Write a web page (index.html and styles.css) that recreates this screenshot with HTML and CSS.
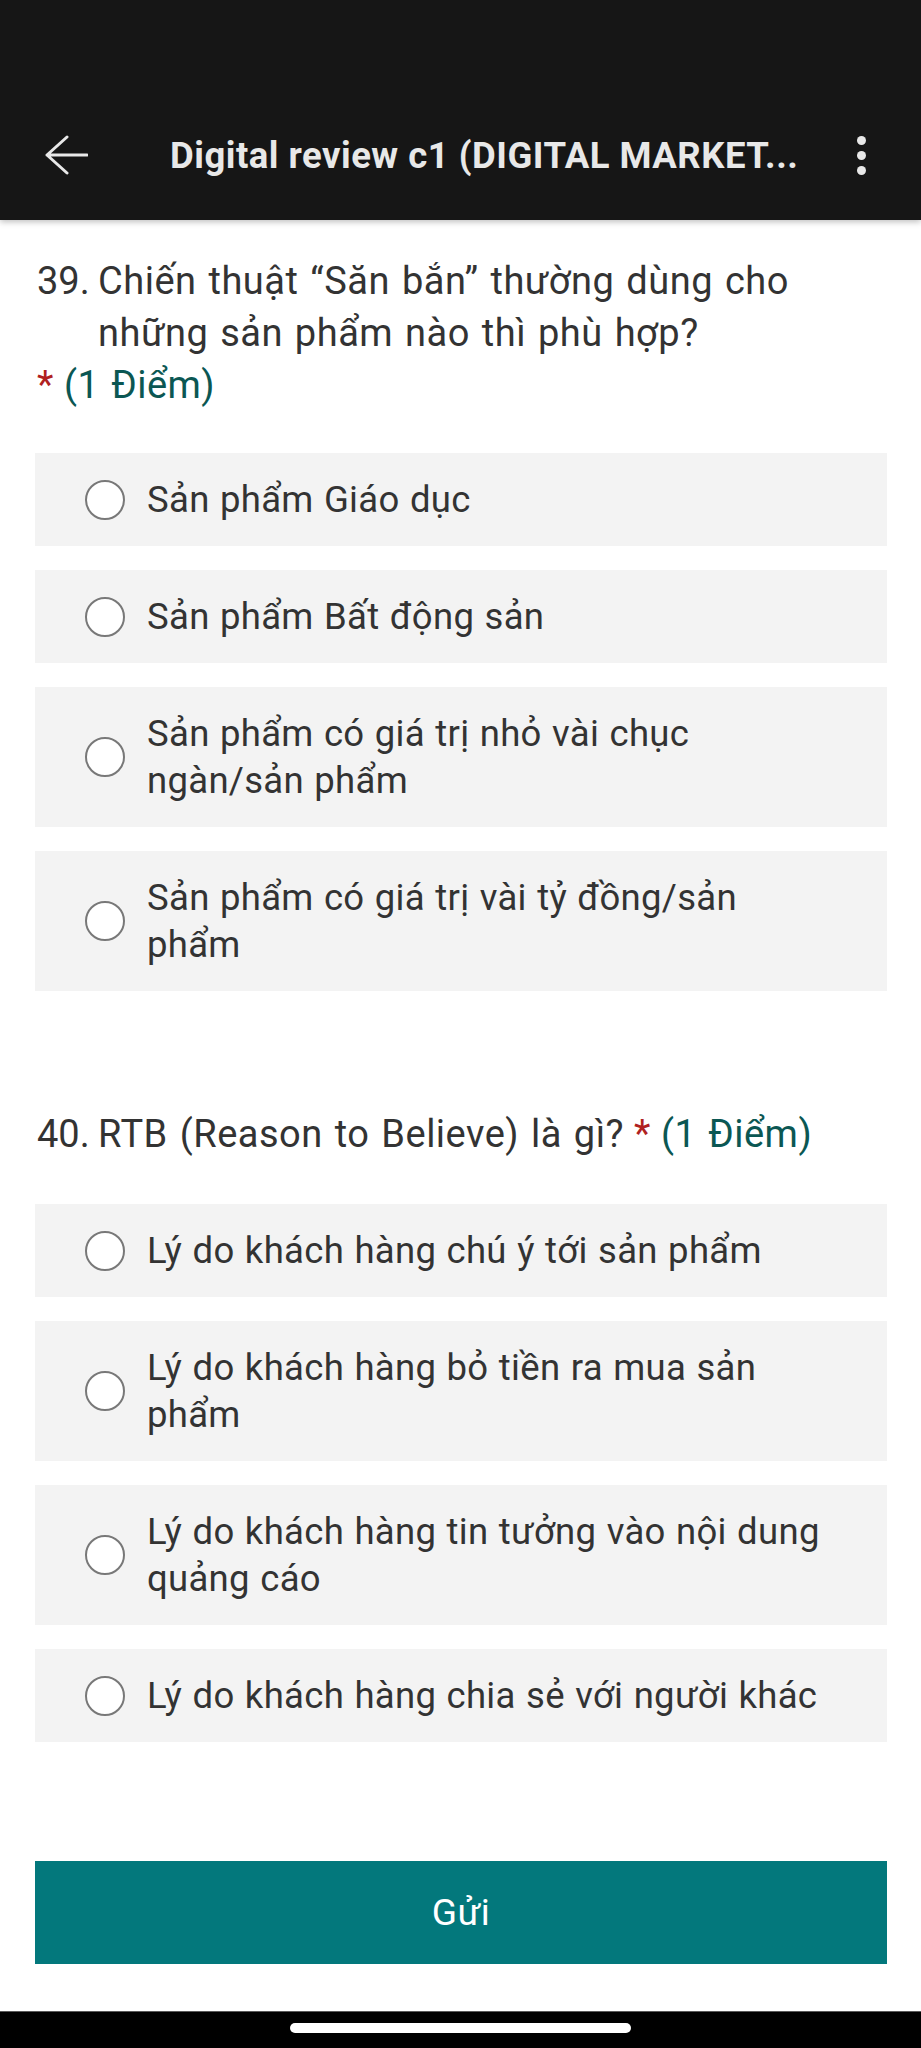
FILE: index.html
```html
<!DOCTYPE html>
<html lang="vi">
<head>
<meta charset="utf-8">
<title>Digital review c1</title>
<link rel="stylesheet" href="styles.css">
</head>
<body>
<header class="appbar">
  <div class="toolbar">
    <button class="icon-btn back" aria-label="Back">
      <svg width="44" height="40" viewBox="0 0 44 40"><path d="M23 2 L3 20 L23 38 M3 20 H43" fill="none" stroke="#e8e8e8" stroke-width="3" stroke-linecap="round" stroke-linejoin="round"/></svg>
    </button>
    <h1 class="title">Digital review c1 (DIGITAL MARKET...</h1>
    <button class="icon-btn more" aria-label="More">
      <span class="dot"></span><span class="dot"></span><span class="dot"></span>
    </button>
  </div>
</header>

<main class="form">
  <section class="question q39">
    <div class="q-title">
      <span class="q-num">39.</span>
      <span class="q-text">Chiến thuật “Săn bắn” thường dùng cho những sản phẩm nào thì phù hợp?</span>
      <span class="q-req">*</span>
      <span class="q-points">(1 Điểm)</span>
    </div>
    <div class="choices">
      <label class="choice"><span class="radio"></span><span class="choice-text">Sản phẩm Giáo dục</span></label>
      <label class="choice"><span class="radio"></span><span class="choice-text">Sản phẩm Bất động sản</span></label>
      <label class="choice"><span class="radio"></span><span class="choice-text">Sản phẩm có giá trị nhỏ vài chục ngàn/sản phẩm</span></label>
      <label class="choice"><span class="radio"></span><span class="choice-text">Sản phẩm có giá trị vài tỷ đồng/sản phẩm</span></label>
    </div>
  </section>

  <section class="question q40">
    <div class="q-title">
      <span class="q-num">40.</span>
      <span class="q-text">RTB (Reason to Believe) là gì?</span>
      <span class="q-req">*</span>
      <span class="q-points">(1 Điểm)</span>
    </div>
    <div class="choices">
      <label class="choice"><span class="radio"></span><span class="choice-text">Lý do khách hàng chú ý tới sản phẩm</span></label>
      <label class="choice"><span class="radio"></span><span class="choice-text">Lý do khách hàng bỏ tiền ra mua sản phẩm</span></label>
      <label class="choice"><span class="radio"></span><span class="choice-text">Lý do khách hàng tin tưởng vào nội dung quảng cáo</span></label>
      <label class="choice"><span class="radio"></span><span class="choice-text">Lý do khách hàng chia sẻ với người khác</span></label>
    </div>
  </section>

  <button class="submit">Gửi</button>
</main>

<footer class="navbar"><span class="pill"></span></footer>
</body>
</html>
```

FILE: styles.css
```css
* { box-sizing: border-box; }
html, body { margin: 0; padding: 0; background: #ffffff; }
body {
  font-family: Roboto, "Noto Sans", "Liberation Sans", sans-serif;
  color: #333333;
  width: 921px;
}

.appbar {
  height: 220px;
  background: #161616;
  padding-top: 100px;
  box-shadow: 0 2px 6px rgba(0, 0, 0, 0.25);
  position: relative;
  z-index: 1;
}
.toolbar {
  height: 110px;
  display: flex;
  align-items: center;
  padding: 0 0 0 44px;
}
.icon-btn {
  background: none;
  border: 0;
  padding: 0;
  margin: 0;
  display: flex;
  align-items: center;
  justify-content: center;
}
.back { width: 44px; height: 40px; }
.back svg { display: block; }
.title {
  margin: 0 0 0 82px;
  font-size: 36.5px;
  font-weight: 700;
  color: #e8e8e8;
  white-space: nowrap;
  flex: 1 1 auto;
  letter-spacing: 0.5px;
}
.more {
  width: 12px;
  flex-direction: column;
  gap: 6px;
  margin-right: 54px;
}
.dot {
  width: 9px;
  height: 9px;
  border-radius: 50%;
  background: #e8e8e8;
  display: block;
}

.form {
  padding: 35px 34px 0 35px;
}
.question { margin-bottom: 117px; }
.question.q40 { margin-bottom: 119px; }

.q-title {
  display: flex;
  flex-wrap: wrap;
  align-items: baseline;
  font-size: 38px;
  line-height: 52px;
  letter-spacing: 0.5px;
  word-spacing: 2px;
  padding-left: 2px;
}
.q-num { width: 61px; flex: none; letter-spacing: 0; }
.q-text { max-width: calc(100% - 61px); }
.q-req { color: #b02121; margin-left: 10px; margin-right: 10px; }
.q39 .q-req { margin-left: 0; }
.q-points { color: #0b5753; }

.choices {
  margin-top: 44px;
  display: flex;
  flex-direction: column;
  gap: 24px;
}
.q39 .choices { margin-top: 42px; }
.choice {
  display: flex;
  align-items: center;
  background: #f3f3f3;
  padding: 23px 58px 23px 50px;
  min-height: 93px;
}
.radio {
  width: 40px;
  height: 40px;
  flex: none;
  border-radius: 50%;
  border: 2.5px solid #787878;
  background: #ffffff;
  margin-right: 22px;
}
.choice-text {
  font-size: 36.5px;
  line-height: 47px;
  letter-spacing: 0.3px;
  word-spacing: 1px;
  color: #333333;
}

.submit {
  display: block;
  width: 100%;
  height: 103px;
  border: 0;
  margin: 0 0 47px 0;
  background: #03787c;
  color: #ffffff;
  font-family: Roboto, "Noto Sans", "Liberation Sans", sans-serif;
  font-size: 37px;
  letter-spacing: 0.4px;
}

.navbar {
  height: 38px;
  background: #000000;
  border-top: 1px solid #5a5a5a;
  display: flex;
  justify-content: center;
  padding-top: 11px;
}
.pill {
  display: block;
  width: 341px;
  height: 10px;
  border-radius: 5px;
  background: #ffffff;
}
```
